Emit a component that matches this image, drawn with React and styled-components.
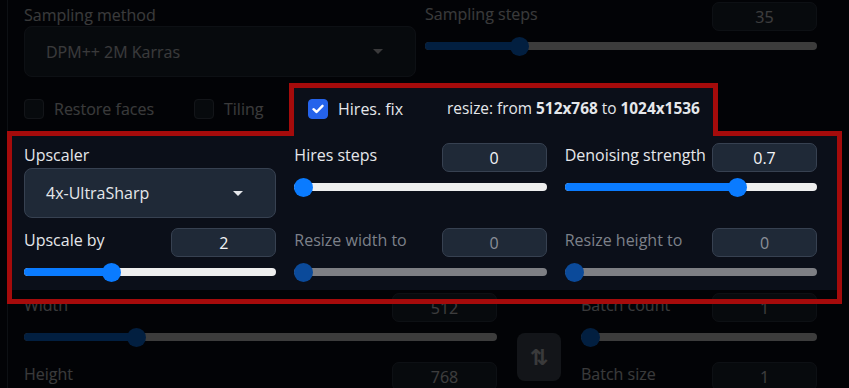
import React from "react";
import styled, { createGlobalStyle } from "styled-components";

const GlobalStyle = createGlobalStyle`
  html, body {
    margin: 0;
    padding: 0;
    background: #0b0f19;
  }
  body {
    font-family: "Open Sans", "Liberation Sans", sans-serif;
    color: #e5e7eb;
  }
  * {
    box-sizing: border-box;
  }
`;

const Page = styled.div`
  position: relative;
  width: 849px;
  height: 388px;
  overflow: hidden;
  background: #0b0f19;
`;

const Panel = styled.div`
  margin-left: 7px;
  border-left: 1px solid #374151;
  padding: 2px 0 0 16px;
  height: 100%;
`;

const Content = styled.div`
  width: 793px;
`;

const TopRow = styled.div`
  display: grid;
  grid-template-columns: 392px 392px;
  column-gap: 9px;
  align-items: start;
`;

const Field = styled.div`
  display: flex;
  flex-direction: column;
`;

const Label = styled.span`
  font-size: 16px;
  line-height: 22px;
  white-space: nowrap;
  color: ${props => (props.disabled ? "#7d818a" : "#e5e7eb")};
  margin-top: ${props => props.offset || 0}px;
`;

const HeaderLabel = styled(Label)`
  margin-bottom: 5px;
`;

const Dropdown = styled.div`
  height: ${props => props.h}px;
  margin-top: ${props => props.gap || 0}px;
  display: flex;
  align-items: center;
  justify-content: space-between;
  padding: 0 32px 0 21px;
  background: #1f2937;
  border: 1px solid #374151;
  border-radius: 8px;
  font-size: 16px;
  color: #e5e7eb;
`;

const Caret = styled.span`
  width: 0;
  height: 0;
  border-left: 5px solid transparent;
  border-right: 5px solid transparent;
  border-top: 5px solid #e5e7eb;
`;

const Header = styled.div`
  height: 29px;
  display: flex;
  align-items: center;
  justify-content: space-between;
`;

const NumberBox = styled.div`
  width: 105px;
  height: 29px;
  display: flex;
  align-items: center;
  justify-content: center;
  background: #1f2937;
  border: 1px solid #374151;
  border-radius: 7px;
  font-size: 16px;
  color: ${props => (props.disabled ? "#8b8f97" : "#f3f4f6")};
`;

const TrackArea = styled.div`
  height: 30px;
  display: flex;
  align-items: center;
`;

const Track = styled.div`
  position: relative;
  flex: 1;
  height: 8px;
  border-radius: 4px;
  background: ${props => (props.disabled ? "#7e7f84" : "#eeeeee")};
`;

const Fill = styled.div`
  position: absolute;
  left: 0;
  top: 0;
  bottom: 0;
  border-radius: 4px;
  background: #0a7bff;
`;

const Thumb = styled.div`
  position: absolute;
  top: 50%;
  width: 19px;
  height: 19px;
  margin-top: -9.5px;
  border-radius: 50%;
  background: ${props => (props.disabled ? "#0b4a9a" : "#0a7bff")};
`;

const CheckRow = styled.div`
  margin-top: 21px;
  height: 20px;
  display: grid;
  grid-template-columns: 170px 114px 139px auto;
  align-items: center;
`;

const CheckItem = styled.label`
  display: flex;
  align-items: center;
  gap: 10px;
  font-size: 16px;
  line-height: 20px;
  color: #e5e7eb;
`;

const Box = styled.span`
  width: 20px;
  height: 20px;
  border-radius: 4px;
  display: flex;
  align-items: center;
  justify-content: center;
  background: ${props => (props.checked ? "#2563eb" : "#1f2937")};
  border: 1px solid ${props => (props.checked ? "#2563eb" : "#4b5563")};
`;

const ResizeInfo = styled.span`
  font-size: 15.4px;
  color: #e5e7eb;
  white-space: nowrap;
  b {
    font-weight: 700;
  }
`;

const HiresGrid = styled.div`
  margin-top: 25px;
  display: grid;
  grid-template-columns: repeat(3, 1fr);
  column-gap: 18px;
  row-gap: 10px;
  align-items: start;
`;

const DimsRow = styled.div`
  margin-top: 6px;
  display: grid;
  grid-template-columns: 473px 44px 236px;
  column-gap: 20px;
  align-items: center;
`;

const Stack = styled.div`
  display: flex;
  flex-direction: column;
  gap: 10px;
`;

const SwapButton = styled.div`
  width: 44px;
  height: 48px;
  border-radius: 8px;
  background: #4b5563;
  display: flex;
  align-items: center;
  justify-content: center;
  font-family: "DejaVu Sans", sans-serif;
  font-weight: 700;
  font-size: 22px;
  color: #e5e7eb;
`;

const Spotlight = styled.svg`
  position: absolute;
  left: 0;
  top: 0;
  pointer-events: none;
`;

const Slider = ({ min, max, value, disabled }) => {
  const frac = (value - min) / (max - min);
  return (
    <TrackArea>
      <Track disabled={disabled}>
        {frac > 0 && <Fill style={{ width: `calc(${frac} * (100% - 19px) + 9.5px)` }} />}
        <Thumb disabled={disabled} style={{ left: `calc(${frac} * (100% - 19px))` }} />
      </Track>
    </TrackArea>
  );
};

const SliderField = ({ label, value, min, max, disabled }) => (
  <Field>
    <Header>
      <HeaderLabel disabled={disabled}>{label}</HeaderLabel>
      <NumberBox disabled={disabled}>{value}</NumberBox>
    </Header>
    <Slider min={min} max={max} value={value} disabled={disabled} />
  </Field>
);

const Check = ({ label, checked }) => (
  <CheckItem>
    <Box checked={checked}>
      {checked && (
        <svg width="12" height="10" viewBox="0 0 12 10">
          <polyline points="1.5,5.2 4.6,8 10.5,1.8" fill="none" stroke="#fff" strokeWidth="2.4" strokeLinecap="round" strokeLinejoin="round" />
        </svg>
      )}
    </Box>
    {label}
  </CheckItem>
);

const hole = "M294 88 H713 V136 H837 V290 H12 V136 H294 Z";
const frame = "M291.5 85.5 H715.5 V133.5 H839.5 V301.5 H9.5 V133.5 H291.5 Z";

const App = () => (
  <Page>
    <GlobalStyle />
    <Panel>
      <Content>
        <TopRow>
          <Field>
            <Label offset={2}>Sampling method</Label>
            <Dropdown h={51}>
              DPM++ 2M Karras
              <Caret />
            </Dropdown>
          </Field>
          <SliderField label="Sampling steps" value={35} min={1} max={150} />
        </TopRow>

        <CheckRow>
          <Check label="Restore faces" />
          <Check label="Tiling" />
          <Check label="Hires. fix" checked />
          <ResizeInfo>
            resize: from <b>512x768</b> to <b>1024x1536</b>
          </ResizeInfo>
        </CheckRow>

        <HiresGrid>
          <Field>
            <Label offset={1}>Upscaler</Label>
            <Dropdown h={50} gap={2}>
              4x-UltraSharp
              <Caret />
            </Dropdown>
          </Field>
          <SliderField label="Hires steps" value={0} min={0} max={150} />
          <SliderField label="Denoising strength" value={0.7} min={0} max={1} />
          <SliderField label="Upscale by" value={2} min={1} max={4} />
          <SliderField label="Resize width to" value={0} min={0} max={2048} disabled />
          <SliderField label="Resize height to" value={0} min={0} max={2048} disabled />
        </HiresGrid>

        <DimsRow>
          <Stack>
            <SliderField label="Width" value={512} min={64} max={2048} />
            <SliderField label="Height" value={768} min={64} max={2048} />
          </Stack>
          <SwapButton>⇅</SwapButton>
          <Stack>
            <SliderField label="Batch count" value={1} min={1} max={100} />
            <SliderField label="Batch size" value={1} min={1} max={8} />
          </Stack>
        </DimsRow>
      </Content>
    </Panel>

    <Spotlight width="849" height="388" viewBox="0 0 849 388">
      <path d={`M0 0 H849 V388 H0 Z ${hole}`} fill="rgba(0,0,0,0.75)" fillRule="evenodd" />
      <path d={frame} fill="none" stroke="#a50b0b" strokeWidth="5" />
    </Spotlight>
  </Page>
);

export default App;
